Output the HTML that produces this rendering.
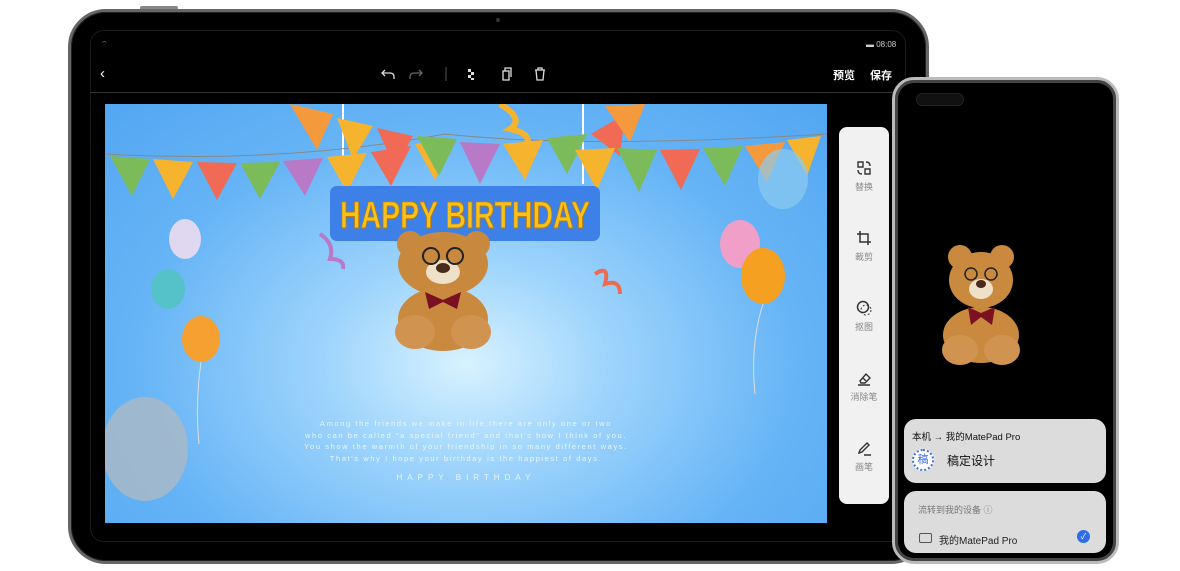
<!DOCTYPE html>
<html><head><meta charset="utf-8"><style>
*{margin:0;padding:0;box-sizing:border-box}
body{width:1180px;height:571px;background:#fff;position:relative;overflow:hidden;font-family:"Liberation Sans","Noto Sans CJK SC",sans-serif}
.abs{position:absolute}
.tab{left:68px;top:9px;width:861px;height:555px;border-radius:38px;background:#000;border:3px solid #666;box-shadow:inset 0 0 0 1px #222}
.scr{left:90px;top:30px;width:816px;height:512px;background:#000;border-radius:14px;border:1px solid #1a1a1a}
.canvas{left:105px;top:104px;width:722px;height:419px;background:radial-gradient(ellipse at 50% 62%,#d8f2ff 0%,#9ed4fc 28%,#66b4f6 65%,#52a6f2 100%);overflow:hidden}
.panel{left:839px;top:127px;width:50px;height:377px;background:#f1f1f1;border-radius:8px}
.pi{position:absolute;left:0;width:50px;text-align:center;font-size:9px;color:#888}
.pi svg{display:block;margin:0 auto 4px}
.ph{left:892px;top:77px;width:227px;height:487px;border-radius:22px;background:#000;border:3px solid #bbb;box-shadow:inset 0 0 0 3px #444}
.card{background:#dcdcdc;border-radius:12px;position:absolute}
.t{color:#fff;font-size:11px;font-weight:bold}
.msg{left:0;width:722px;top:314px;text-align:center;color:#eaf6ff;font-size:7.5px;letter-spacing:1.6px;line-height:11.5px}
</style></head><body>
<div class="abs" style="left:140px;top:6px;width:38px;height:4px;background:#888;border-radius:2px"></div>
<div class="abs tab"></div>
<div class="abs scr"></div>
<div class="abs" style="left:496px;top:18px;width:4px;height:4px;border-radius:50%;background:#333"></div>
<div class="abs" style="left:101px;top:40px;color:#aaa;font-size:7px">⌔</div>
<div class="abs" style="left:866px;top:40px;color:#ccc;font-size:8px">▬ 08:08</div>
<div class="abs t" style="left:100px;top:65px;font-size:15px;font-weight:normal">‹</div>
<svg class="abs" style="left:380px;top:66px" width="170" height="16">
<path d="M5 4 L2 7 L5 10 M2 7 H10 Q14 7 14 11 V13" stroke="#ddd" fill="none" stroke-width="1.3"/>
<path d="M39 4 L42 7 L39 10 M42 7 H34 Q30 7 30 11 V13" stroke="#666" fill="none" stroke-width="1.3"/>
<line x1="66" y1="1" x2="66" y2="15" stroke="#555"/>
<g fill="#ddd"><rect x="88" y="3" width="3" height="3"/><rect x="91" y="6" width="3" height="3"/><rect x="88" y="9" width="3" height="3"/><rect x="91" y="12" width="3" height="2"/></g>
<rect x="123" y="5" width="6" height="9" stroke="#ddd" fill="none" stroke-width="1.3"/><path d="M125 5V2H131V11" stroke="#ddd" fill="none" stroke-width="1.3"/>
<path d="M155 4H165M158 4V2H162V4M156 4L157 14H163L164 4" stroke="#ddd" fill="none" stroke-width="1.3"/>
</svg>
<div class="abs t" style="left:833px;top:67px">预览</div>
<div class="abs t" style="left:870px;top:67px">保存</div>
<div class="abs" style="left:90px;top:92px;width:816px;height:1px;background:#333"></div>

<div class="abs canvas">
<svg width="722" height="419" style="position:absolute;left:0;top:0">
<line x1="238" y1="0" x2="238" y2="80" stroke="#fff" stroke-width="2"/>
<line x1="478" y1="0" x2="478" y2="80" stroke="#fff" stroke-width="2"/>
<path d="M0 50 Q180 60 340 30 Q480 45 722 30" stroke="#888" fill="none"/>
<g>
<polygon points="5,52 45,55 27,92" fill="#7cbb5a"/>
<polygon points="48,55 88,58 68,95" fill="#f6b42e"/>
<polygon points="92,58 132,59 112,96" fill="#f06a55"/>
<polygon points="135,59 175,58 155,95" fill="#7cbb5a"/>
<polygon points="178,57 218,54 200,92" fill="#b879c6"/>
<polygon points="222,53 262,49 242,88" fill="#f6b42e"/>
<polygon points="266,48 306,42 286,82" fill="#f06a55"/>
<polygon points="310,40 350,35 330,76" fill="#f6b42e"/>
<polygon points="185,0 228,10 212,46" fill="#f59a3c"/>
<polygon points="232,14 268,22 248,55" fill="#f6b42e"/>
<polygon points="272,24 308,32 290,64" fill="#f06a55"/>
<polygon points="312,32 352,35 334,72" fill="#7cbb5a"/>
<polygon points="355,38 395,40 375,80" fill="#b879c6"/>
<polygon points="398,40 438,36 420,76" fill="#f6b42e"/>
<polygon points="442,34 482,30 462,70" fill="#7cbb5a"/>
<polygon points="486,30 520,10 515,52" fill="#f06a55"/>
<polygon points="500,2 540,0 525,38" fill="#f59a3c"/>
<polygon points="470,46 510,44 492,86" fill="#f6b42e"/>
<polygon points="512,44 552,46 534,88" fill="#7cbb5a"/>
<polygon points="555,46 595,45 576,86" fill="#f06a55"/>
<polygon points="598,44 638,42 620,82" fill="#7cbb5a"/>
<polygon points="640,42 680,38 662,78" fill="#f59a3c"/>
<polygon points="682,36 716,32 702,72" fill="#f6b42e"/>
</g>
<path d="M395 0 Q420 15 405 25 Q430 30 420 45" stroke="#f6b42e" stroke-width="6" fill="none"/>
<path d="M490 170 Q505 160 500 180 Q515 175 515 190" stroke="#ee6a50" stroke-width="4" fill="none"/>
<path d="M215 130 Q230 140 225 155 Q240 155 238 165" stroke="#b879c6" stroke-width="4" fill="none"/>
<rect x="225" y="82" width="270" height="55" rx="7" fill="#3c80e8"/>
<text x="360" y="124" text-anchor="middle" font-family="Liberation Sans" font-weight="bold" font-size="38" fill="#f8c21e" stroke="#c07b00" stroke-width="1" textLength="250" lengthAdjust="spacingAndGlyphs">HAPPY BIRTHDAY</text>
<g>
<ellipse cx="338" cy="160" rx="45" ry="32" fill="#c8893e"/>
<circle cx="305" cy="140" r="13" fill="#c8893e"/><circle cx="372" cy="140" r="13" fill="#c8893e"/>
<ellipse cx="338" cy="168" rx="17" ry="12" fill="#efe0c8"/>
<ellipse cx="338" cy="164" rx="7" ry="5" fill="#4a2a1a"/>
<circle cx="326" cy="152" r="8" fill="none" stroke="#222" stroke-width="2"/><circle cx="350" cy="152" r="8" fill="none" stroke="#222" stroke-width="2"/>
<ellipse cx="338" cy="215" rx="45" ry="32" fill="#c98a40"/>
<ellipse cx="310" cy="228" rx="20" ry="17" fill="#d09350"/><ellipse cx="366" cy="228" rx="20" ry="17" fill="#d09350"/>
<path d="M320 188 L338 196 L356 188 L352 205 L338 198 L324 205Z" fill="#7a1020"/>
</g>
<ellipse cx="80" cy="135" rx="16" ry="20" fill="#e0d8f0"/>
<ellipse cx="63" cy="185" rx="17" ry="20" fill="#54c2c8"/>
<ellipse cx="96" cy="235" rx="19" ry="23" fill="#f5a030"/>
<ellipse cx="40" cy="345" rx="43" ry="52" fill="#a8b8c8" opacity=".85"/>
<ellipse cx="635" cy="140" rx="20" ry="24" fill="#f0a0c8"/>
<ellipse cx="658" cy="172" rx="22" ry="28" fill="#f5a020"/>
<ellipse cx="678" cy="75" rx="25" ry="30" fill="#8ccbf0" opacity=".7"/>
<path d="M96 258 Q90 300 94 340 M658 200 Q645 240 650 290" stroke="#ddd" fill="none"/>
</svg>
<div class="abs msg">Among the friends we make in life,there are only one or two<br>who can be called "a special friend" and that's how I think of you.<br>You show the warmth of your friendship in so many different ways.<br>That's why I hope your birthday is the happiest of days.<br><span style="display:block;margin-top:8px;letter-spacing:5px;font-size:8px">HAPPY BIRTHDAY</span></div>
</div>

<div class="abs panel">
<div class="pi" style="top:33px"><svg width="16" height="16"><path d="M2 2H7V7H2Z M9 9H14V14H9Z M10 2Q14 2 14 6 M6 14Q2 14 2 10" stroke="#333" fill="none" stroke-width="1.4"/></svg>替换</div>
<div class="pi" style="top:103px"><svg width="16" height="16"><path d="M4 1V12H15 M1 4H12V15" stroke="#333" fill="none" stroke-width="1.5"/></svg>裁剪</div>
<div class="pi" style="top:173px"><svg width="16" height="16"><circle cx="7" cy="7" r="5.5" stroke="#333" fill="none" stroke-width="1.5"/><circle cx="10" cy="10" r="5" stroke="#333" fill="none" stroke-dasharray="2 2"/></svg>抠图</div>
<div class="pi" style="top:243px"><svg width="16" height="16"><path d="M4 11L10 4L14 8L9 13H5Z M7 8L11 12 M2 15H14" stroke="#333" fill="none" stroke-width="1.4"/></svg>消除笔</div>
<div class="pi" style="top:313px"><svg width="16" height="16"><path d="M3 13L4 10L11 3L13 5L6 12Z M8 15H15" stroke="#333" fill="none" stroke-width="1.4"/></svg>画笔</div>
</div>

<div class="abs ph"></div>
<div class="abs" style="left:916px;top:93px;width:48px;height:13px;border-radius:7px;background:#111;border:1px solid #222"></div>
<svg class="abs" style="left:940px;top:245px" width="85" height="125">
<circle cx="20" cy="12" r="12" fill="#c98a40"/><circle cx="62" cy="12" r="12" fill="#c98a40"/>
<ellipse cx="41" cy="35" rx="32" ry="28" fill="#c98a40"/>
<ellipse cx="41" cy="44" rx="12" ry="10" fill="#efe0c8"/><ellipse cx="41" cy="39" rx="5" ry="4" fill="#4a2a1a"/>
<circle cx="31" cy="29" r="6" fill="none" stroke="#222" stroke-width="1.5"/><circle cx="51" cy="29" r="6" fill="none" stroke="#222" stroke-width="1.5"/>
<ellipse cx="41" cy="90" rx="38" ry="28" fill="#c98a40"/>
<ellipse cx="20" cy="105" rx="18" ry="15" fill="#d09350"/><ellipse cx="62" cy="105" rx="18" ry="15" fill="#d09350"/>
<path d="M28 62L41 68L55 62L52 80L41 72L31 80Z" fill="#7a1020"/>
</svg>
<div class="card" style="left:904px;top:419px;width:202px;height:64px">
<div class="abs" style="left:8px;top:10px;font-size:9.5px;color:#111">本机 → 我的MatePad Pro</div>
<div class="abs" style="left:8px;top:30px;width:22px;height:22px;border-radius:50%;border:2px dotted #3a6fe0;color:#3a6fe0;font-size:11px;text-align:center;line-height:18px;background:#fff">稿</div>
<div class="abs" style="left:43px;top:33px;font-size:12px;color:#111">稿定设计</div>
</div>
<div class="card" style="left:904px;top:491px;width:202px;height:62px">
<div class="abs" style="left:14px;top:12px;font-size:9px;color:#777">流转到我的设备 ⓘ</div>
<div class="abs" style="left:15px;top:42px;width:13px;height:10px;border:1.3px solid #555;border-radius:2px"></div>
<div class="abs" style="left:35px;top:41px;font-size:10px;color:#222">我的MatePad Pro</div>
<div class="abs" style="left:173px;top:39px;width:13px;height:13px;border-radius:50%;background:#2f6ee8;color:#fff;font-size:8px;text-align:center;line-height:13px">✓</div>
</div>
</body></html>
